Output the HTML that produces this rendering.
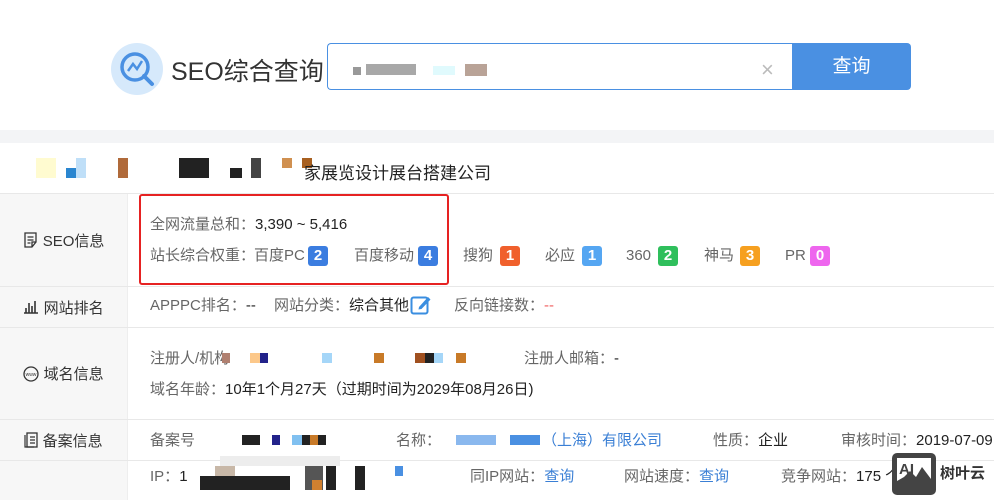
<!DOCTYPE html>
<html><head><meta charset="utf-8"><style>
*{margin:0;padding:0;box-sizing:border-box}
body{width:994px;height:500px;overflow:hidden;background:#fff;font-family:"Liberation Sans","Noto Sans CJK SC",sans-serif;position:relative;color:#333}
.a{position:absolute;white-space:nowrap}
.g{color:#666;font-size:15px;line-height:20px}
.k{color:#222;font-size:15px}
.b{position:absolute;top:246px;width:20px;height:20px;border-radius:3px;color:#fff;font-weight:bold;text-align:center;line-height:20px;font-size:15px}
.blk{position:absolute}
.lc{position:absolute;left:0;width:128px;background:#f7f7f7;border-right:1px solid #eee;display:flex;align-items:center;justify-content:center;font-size:15px;color:#333}
.hl{position:absolute;left:0;width:994px;height:1px;background:#e8e8e8}
.lk{color:#3a7fd5}
</style></head><body>
<svg class="a" style="left:111px;top:43px" width="52" height="52" viewBox="0 0 52 52"><circle cx="26" cy="26" r="26" fill="#d6e9fb"/><circle cx="24" cy="24" r="13" fill="none" stroke="#4a90e2" stroke-width="3.5"/><path d="M33 33 L41 41" stroke="#4a90e2" stroke-width="4" stroke-linecap="round"/><path d="M17 28 L22 21 L26 26 L31 18" fill="none" stroke="#4a90e2" stroke-width="2.5"/></svg>
<div class="a" style="left:171px;top:52px;font-size:25px;color:#333">SEO综合查询</div>
<div class="a" style="left:327px;top:43px;width:466px;height:47px;border:1px solid #4a90e2;border-right:none;border-radius:4px 0 0 4px"></div>
<div class="a" style="left:792px;top:43px;width:119px;height:47px;background:#4a90e2;border-radius:0 4px 4px 0;color:#fff;font-size:19px;text-align:center;line-height:47px">查询</div>
<div class="a" style="left:761px;top:57px;font-size:22px;color:#bbb">×</div>
<div class="blk" style="left:353px;top:67px;width:8px;height:8px;background:#999"></div>
<div class="blk" style="left:366px;top:64px;width:50px;height:11px;background:#a8a8a8"></div>
<div class="blk" style="left:433px;top:66px;width:22px;height:9px;background:#e0fafd"></div>
<div class="blk" style="left:465px;top:64px;width:22px;height:12px;background:#b9a397"></div>
<div class="a" style="left:0;top:130px;width:994px;height:13px;background:#f3f4f6"></div>
<div class="blk" style="left:36px;top:158px;width:20px;height:20px;background:#fffbd0"></div>
<div class="blk" style="left:66px;top:168px;width:10px;height:10px;background:#2a86d0"></div>
<div class="blk" style="left:76px;top:158px;width:10px;height:20px;background:#bfdff8"></div>
<div class="blk" style="left:118px;top:158px;width:10px;height:20px;background:#b06a3a"></div>
<div class="blk" style="left:179px;top:158px;width:30px;height:20px;background:#222"></div>
<div class="blk" style="left:230px;top:168px;width:12px;height:10px;background:#222"></div>
<div class="blk" style="left:251px;top:158px;width:10px;height:20px;background:#444"></div>
<div class="blk" style="left:282px;top:158px;width:10px;height:10px;background:#d09050"></div>
<div class="blk" style="left:302px;top:158px;width:10px;height:10px;background:#a86020"></div>
<div class="a" style="left:304px;top:159px;font-size:17px;color:#222">家展览设计展台搭建公司</div>
<div class="hl" style="top:193px"></div>
<div class="lc" style="top:194px;height:92px">
<svg width="16" height="16" viewBox="0 0 16 16"><path d="M2 1h11v9l-4 5H2z M9 15v-5h4" fill="none" stroke="#333" stroke-width="1.3"/><path d="M4.5 5h6M4.5 8h6M4.5 11h3" stroke="#333" stroke-width="1.2"/></svg>&nbsp;SEO信息</div>
<div class="hl" style="top:286px"></div>
<div class="lc" style="top:287px;height:40px">
<svg width="16" height="14" viewBox="0 0 16 14"><path d="M1 13h14M3 13V8M6 13V3M9 13V6M12 13V1" stroke="#333" stroke-width="1.6" fill="none"/></svg>&nbsp;网站排名</div>
<div class="hl" style="top:327px"></div>
<div class="lc" style="top:328px;height:91px">
<svg width="16" height="16" viewBox="0 0 16 16"><circle cx="8" cy="8" r="7" fill="none" stroke="#333" stroke-width="1.3"/><text x="8" y="10" font-size="5" text-anchor="middle" fill="#333" font-family="Liberation Sans">www</text></svg>&nbsp;域名信息</div>
<div class="hl" style="top:419px"></div>
<div class="lc" style="top:420px;height:40px">
<svg width="14" height="16" viewBox="0 0 14 16"><rect x="3" y="1" width="10" height="14" fill="none" stroke="#333" stroke-width="1.3"/><path d="M1 3v12h9M6 5h5M6 8h5M6 11h5" stroke="#333" stroke-width="1.2" fill="none"/></svg>&nbsp;备案信息</div>
<div class="hl" style="top:460px"></div>
<div class="lc" style="top:461px;height:39px"></div>
<div class="a" style="left:139px;top:194px;width:310px;height:91px;border:2px solid #e62222;border-radius:3px"></div>
<div class="a g" style="left:150px;top:215px">全网流量总和：<span class="k">3,390 ~ 5,416</span></div>
<div class="a g" style="left:150px;top:246px">站长综合权重：</div>
<div class="a g" style="left:254px;top:246px">百度PC</div><div class="b" style="left:308px;background:#3b7de0">2</div>
<div class="a g" style="left:354px;top:246px">百度移动</div><div class="b" style="left:418px;background:#3b7de0">4</div>
<div class="a g" style="left:463px;top:246px">搜狗</div><div class="b" style="left:500px;background:#f0602c">1</div>
<div class="a g" style="left:545px;top:246px">必应</div><div class="b" style="left:582px;background:#55a6f2">1</div>
<div class="a g" style="left:626px;top:246px">360</div><div class="b" style="left:658px;background:#2fbf5c">2</div>
<div class="a g" style="left:704px;top:246px">神马</div><div class="b" style="left:740px;background:#f6a020">3</div>
<div class="a g" style="left:785px;top:246px">PR</div><div class="b" style="left:810px;background:#ee66ee">0</div>
<div class="a g" style="left:150px;top:296px">APPPC排名：<span class="k">--</span></div>
<div class="a g" style="left:274px;top:296px">网站分类：<span class="k">综合其他</span></div>
<svg class="a" style="left:410px;top:294px" width="22" height="22" viewBox="0 0 22 22"><rect x="1.5" y="3.5" width="16" height="16" rx="2" fill="none" stroke="#3a8ee0" stroke-width="2"/><path d="M9 13 L18 3 L20.5 5.5 L11.5 15 L8.5 15.5 Z" fill="#3a8ee0"/></svg>
<div class="a g" style="left:454px;top:296px">反向链接数：<span style="color:#f06060">--</span></div>
<div class="a g" style="left:150px;top:349px">注册人/机构</div>
<div class="blk" style="left:222px;top:353px;width:8px;height:10px;background:#b08070"></div>
<div class="blk" style="left:250px;top:353px;width:10px;height:10px;background:#fcc88a"></div>
<div class="blk" style="left:260px;top:353px;width:8px;height:10px;background:#22228a"></div>
<div class="blk" style="left:322px;top:353px;width:10px;height:10px;background:#a5d6f8"></div>
<div class="blk" style="left:374px;top:353px;width:10px;height:10px;background:#c87a28"></div>
<div class="blk" style="left:415px;top:353px;width:10px;height:10px;background:#a05020"></div>
<div class="blk" style="left:425px;top:353px;width:9px;height:10px;background:#222"></div>
<div class="blk" style="left:434px;top:353px;width:9px;height:10px;background:#a5d6f8"></div>
<div class="blk" style="left:456px;top:353px;width:10px;height:10px;background:#c87a28"></div>
<div class="a g" style="left:524px;top:349px">注册人邮箱：<span class="k">-</span></div>
<div class="a g" style="left:150px;top:380px">域名年龄：<span class="k">10年1个月27天（过期时间为2029年08月26日)</span></div>
<div class="a g" style="left:150px;top:431px">备案号</div>
<div class="blk" style="left:242px;top:435px;width:18px;height:10px;background:#222"></div>
<div class="blk" style="left:272px;top:435px;width:8px;height:10px;background:#22228a"></div>
<div class="blk" style="left:292px;top:435px;width:10px;height:10px;background:#80c0f0"></div>
<div class="blk" style="left:302px;top:435px;width:8px;height:10px;background:#222"></div>
<div class="blk" style="left:310px;top:435px;width:8px;height:10px;background:#c87a28"></div>
<div class="blk" style="left:318px;top:435px;width:8px;height:10px;background:#222"></div>
<div class="a g" style="left:396px;top:431px">名称：</div>
<div class="blk" style="left:456px;top:435px;width:40px;height:10px;background:#8ab8ee"></div>
<div class="blk" style="left:510px;top:435px;width:30px;height:10px;background:#4a90e2"></div>
<div class="a g lk" style="left:542px;top:431px">（上海）有限公司</div>
<div class="a g" style="left:713px;top:431px">性质：<span class="k">企业</span></div>
<div class="a g" style="left:841px;top:431px">审核时间：<span class="k">2019-07-09</span></div>
<div class="a g" style="left:150px;top:467px">IP：<span class="k">1</span></div>
<div class="blk" style="left:220px;top:456px;width:120px;height:10px;background:#ededed"></div>
<div class="blk" style="left:200px;top:476px;width:90px;height:14px;background:#222"></div>
<div class="blk" style="left:215px;top:466px;width:20px;height:10px;background:#c8b8a8"></div>
<div class="blk" style="left:305px;top:466px;width:18px;height:24px;background:#555"></div>
<div class="blk" style="left:312px;top:480px;width:10px;height:10px;background:#d08030"></div>
<div class="blk" style="left:326px;top:466px;width:10px;height:24px;background:#222"></div>
<div class="blk" style="left:355px;top:466px;width:10px;height:24px;background:#222"></div>
<div class="blk" style="left:395px;top:466px;width:8px;height:10px;background:#4a90e2"></div>
<div class="a g" style="left:470px;top:467px">同IP网站：<span class="lk">查询</span></div>
<div class="a g" style="left:624px;top:467px">网站速度：<span class="lk">查询</span></div>
<div class="a g" style="left:781px;top:467px">竞争网站：<span class="k">175 个</span></div>
<div class="a" style="left:892px;top:453px;width:44px;height:42px;background:#444;border-radius:5px"></div>
<svg class="a" style="left:896px;top:457px" width="36" height="34" viewBox="0 0 36 34"><rect x="1" y="1" width="34" height="32" fill="#fff"/><path d="M1 33 L1 24 L8 20 L14 14 L20 20 L26 10 L35 22 L35 33Z" fill="#444"/><text x="3" y="17" font-size="15" font-weight="bold" fill="#444" font-family="Liberation Sans">AI</text></svg>
<div class="a" style="left:940px;top:462px;font-size:15px;font-weight:bold;color:#333">树叶云</div>
</body></html>
